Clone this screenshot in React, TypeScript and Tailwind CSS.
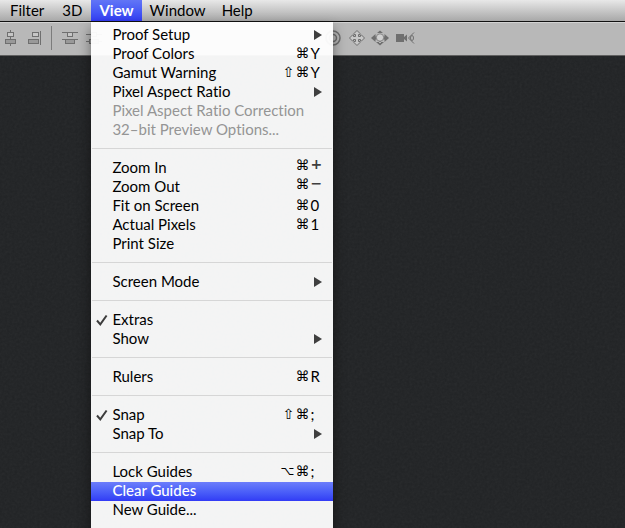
import React from 'react';
import clsx from 'clsx';

interface MenuEntry {
  label: string;
  modifiers?: string[];
  shortcut?: string;
  submenu?: boolean;
  checked?: boolean;
  disabled?: boolean;
  active?: boolean;
}

const groups: MenuEntry[][] = [
  [
    { label: 'Proof Setup', submenu: true },
    { label: 'Proof Colors', modifiers: ['⌘'], shortcut: 'Y' },
    { label: 'Gamut Warning', modifiers: ['⇧', '⌘'], shortcut: 'Y' },
    { label: 'Pixel Aspect Ratio', submenu: true },
    { label: 'Pixel Aspect Ratio Correction', disabled: true },
    { label: '32–bit Preview Options...', disabled: true },
  ],
  [
    { label: 'Zoom In', modifiers: ['⌘'], shortcut: '+' },
    { label: 'Zoom Out', modifiers: ['⌘'], shortcut: '−' },
    { label: 'Fit on Screen', modifiers: ['⌘'], shortcut: '0' },
    { label: 'Actual Pixels', modifiers: ['⌘'], shortcut: '1' },
    { label: 'Print Size' },
  ],
  [{ label: 'Screen Mode', submenu: true }],
  [
    { label: 'Extras', checked: true },
    { label: 'Show', submenu: true },
  ],
  [{ label: 'Rulers', modifiers: ['⌘'], shortcut: 'R' }],
  [
    { label: 'Snap', checked: true, modifiers: ['⇧', '⌘'], shortcut: ';' },
    { label: 'Snap To', submenu: true },
  ],
  [
    { label: 'Lock Guides', modifiers: ['⌥', '⌘'], shortcut: ';' },
    { label: 'Clear Guides', active: true },
    { label: 'New Guide...' },
  ],
];

const CheckMark = () => (
  <svg viewBox="0 0 12 12" className="h-3 w-3" fill="none" stroke="#3c3c3c" strokeWidth="2">
    <path d="M1 6.5 L4.3 10.3 L10.6 1.5" />
  </svg>
);

const Arrow = () => (
  <svg viewBox="0 0 8 10" className="h-[10px] w-2" fill="#3f3f3f">
    <path d="M0 0 L8 5 L0 10 Z" />
  </svg>
);

const MenuRow: React.FC<{ item: MenuEntry }> = ({ item }) => {
  const symbolKey = item.shortcut === '+' || item.shortcut === '−';

  return (
    <li role="none">
      <button
        type="button"
        role="menuitem"
        disabled={item.disabled}
        className={clsx(
          'flex h-[19px] w-full items-center pr-[11px] pb-[2px] pl-[5px] text-left leading-[19px] whitespace-nowrap',
          item.active && 'bg-linear-to-b from-[#6c7dfb] to-[#323af5] font-medium text-white',
          item.disabled && 'text-[#959595]',
        )}
      >
        <span className="flex w-4 shrink-0">{item.checked && <CheckMark />}</span>
        <span className="flex-1">{item.label}</span>
        {item.modifiers && (
          <span className={clsx('flex items-center', symbolKey && 'pb-1')}>
            {item.modifiers.map(mod => (
              <span
                key={mod}
                className={clsx(
                  "text-center font-['DejaVu_Sans',sans-serif] leading-[19px]",
                  mod === '⌥' ? 'w-4 text-xs' : 'w-[14px] text-sm',
                )}
              >
                {mod}
              </span>
            ))}
            <span
              className={clsx(
                'ml-px w-3',
                symbolKey && "pb-1 font-['DejaVu_Sans',sans-serif] text-sm leading-4 font-bold text-[#3f3f3f]",
              )}
            >
              {item.shortcut}
            </span>
          </span>
        )}
        {item.submenu && <Arrow />}
      </button>
    </li>
  );
};

const ViewMenu = () => (
  <ul role="menu" className="absolute top-full left-0 z-10 mt-px w-[242px] bg-white/95 pt-1 pb-3 text-black shadow-[0_6px_12px_rgba(0,0,0,0.45)]">
    {groups.map((group, index) => (
      <React.Fragment key={index}>
        {index > 0 && (
          <li role="separator" className="flex h-[19px] items-center px-px pb-[2px]">
            <span className="h-px w-full bg-[#d6d6d6]" />
          </li>
        )}
        {group.map(item => <MenuRow key={item.label} item={item} />)}
      </React.Fragment>
    ))}
  </ul>
);

const ToolButton: React.FC<{ label: string; className: string; viewBox: string; children: React.ReactNode }> = ({ label, className, viewBox, children }) => (
  <button type="button" aria-label={label} className="shrink-0">
    <svg viewBox={viewBox} className={className} fill="none" stroke="#6f6f6f" strokeWidth="1">
      {children}
    </svg>
  </button>
);

const Toolbar = () => (
  <div className="flex h-[34px] items-center border-t border-b border-t-[#d2d2d2] border-b-[#606060] bg-[#b8b8b8] pb-[2px] pl-[5px]">
    <ToolButton label="Align horizontal centers" className="h-4 w-[11px]" viewBox="0 0 11 16">
      <path d="M5.5 0 V2 M5.5 7 V9 M5.5 14 V16" />
      <rect x="2.5" y="2.5" width="6" height="4" fill="#c6c6c6" />
      <rect x="0.5" y="9.5" width="10" height="4" fill="#999" />
    </ToolButton>
    <div className="w-[11px] shrink-0" />
    <ToolButton label="Align right edges" className="h-4 w-[14px]" viewBox="0 0 14 16">
      <path d="M13.5 1 V15" />
      <rect x="5.5" y="2.5" width="6" height="4" fill="#c6c6c6" />
      <rect x="1.5" y="9.5" width="10" height="4" fill="#999" />
    </ToolButton>
    <div className="mx-[10px] h-6 w-px shrink-0 bg-[#7c7c7c]" />
    <ToolButton label="Distribute top edges" className="h-4 w-4" viewBox="0 0 16 16">
      <path d="M0 2.5 H16 M0 9.5 H16" />
      <rect x="5.5" y="2.5" width="5" height="4" fill="#c6c6c6" />
      <rect x="3.5" y="9.5" width="9" height="4" fill="#999" />
    </ToolButton>
    <div className="w-2 shrink-0" />
    <ToolButton label="Distribute vertical centers" className="h-4 w-4" viewBox="0 0 16 16">
      <path d="M0 4.5 H16 M0 11.5 H16" />
      <rect x="5.5" y="2.5" width="5" height="4" fill="#c6c6c6" />
      <rect x="3.5" y="9.5" width="9" height="4" fill="#999" />
    </ToolButton>
    <div className="w-[223px] shrink-0" />
    <ToolButton label="Roll camera" className="h-4 w-4" viewBox="0 0 16 16">
      <circle cx="8" cy="8" r="7" strokeWidth="1.5" />
      <circle cx="8" cy="8" r="3.5" strokeWidth="1.5" />
    </ToolButton>
    <div className="w-2 shrink-0" />
    <ToolButton label="Pan camera" className="h-4 w-4" viewBox="0 0 16 16">
      <path
        d="M8 .5 L11 3.5 V4.5 H9.5 V6.5 H11.5 V5 H12.5 L15.5 8 L12.5 11 H11.5 V9.5 H9.5 V11.5 H11 V12.5 L8 15.5 L5 12.5 V11.5 H6.5 V9.5 H4.5 V11 H3.5 L.5 8 L3.5 5 H4.5 V6.5 H6.5 V4.5 H5 V3.5 Z"
        fill="#c8c8c8"
      />
    </ToolButton>
    <div className="w-[6px] shrink-0" />
    <ToolButton label="Slide camera" className="h-4 w-[18px]" viewBox="0 0 18 16">
      <path
        d="M9 .5 L12 3 H6 Z M9 15.5 L13 12 H5 Z M0 8 L4.5 4 V6.5 H13.5 V4 L18 8 L13.5 12 V9.5 H4.5 V12 Z M8 11 H10 V13 H8 Z"
        fill="#6f6f6f"
        stroke="none"
      />
      <circle cx="9" cy="7.5" r="3.7" fill="#d0d0d0" stroke="#888" />
    </ToolButton>
    <div className="w-[7px] shrink-0" />
    <ToolButton label="Zoom camera" className="h-4 w-[19px]" viewBox="0 0 19 16">
      <path d="M0 4 H8 V7 L11 4.5 V11.5 L8 9 V12 H0 Z" fill="#6f6f6f" stroke="none" />
      <path d="M18 2.5 L12.5 8 L18 13.5" />
      <ellipse cx="16" cy="8" rx="1.5" ry="2.5" />
    </ToolButton>
  </div>
);

const menuButton = 'block h-[21px] leading-[21px]';

export default function App() {
  return (
    <div className="flex min-h-screen flex-col overflow-hidden bg-[#212325] font-['Lato','Liberation_Sans',sans-serif] text-[15px] text-black [font-variant-ligatures:none]">
      <nav className="border-b border-[#111] bg-linear-to-b from-[#e8e8e8] to-[#a8a8a8]">
        <ul role="menubar" className="flex pl-px">
          <li role="none"><button type="button" role="menuitem" className={clsx(menuButton, 'px-[9px]')}>Filter</button></li>
          <li role="none"><button type="button" role="menuitem" className={clsx(menuButton, 'px-[9px]')}>3D</button></li>
          <li role="none" className="relative">
            <button
              type="button"
              role="menuitem"
              aria-expanded="true"
              className={clsx(menuButton, 'bg-linear-to-b from-[#6275f6] to-[#343cf4] px-2 font-bold text-white')}
            >
              View
            </button>
            <ViewMenu />
          </li>
          <li role="none"><button type="button" role="menuitem" className={clsx(menuButton, 'px-2')}>Window</button></li>
          <li role="none"><button type="button" role="menuitem" className={clsx(menuButton, 'px-2')}>Help</button></li>
        </ul>
      </nav>
      <Toolbar />
      <main className="flex flex-1">
        {/* grain on the canvas backdrop */}
        <svg className="w-full flex-1 opacity-5" aria-hidden="true">
          <filter id="grain" x="0" y="0" width="100%" height="100%">
            <feTurbulence type="fractalNoise" baseFrequency="0.4" numOctaves="3" />
            <feColorMatrix type="saturate" values="0" />
          </filter>
          <rect width="100%" height="100%" filter="url(#grain)" />
        </svg>
      </main>
    </div>
  );
}
